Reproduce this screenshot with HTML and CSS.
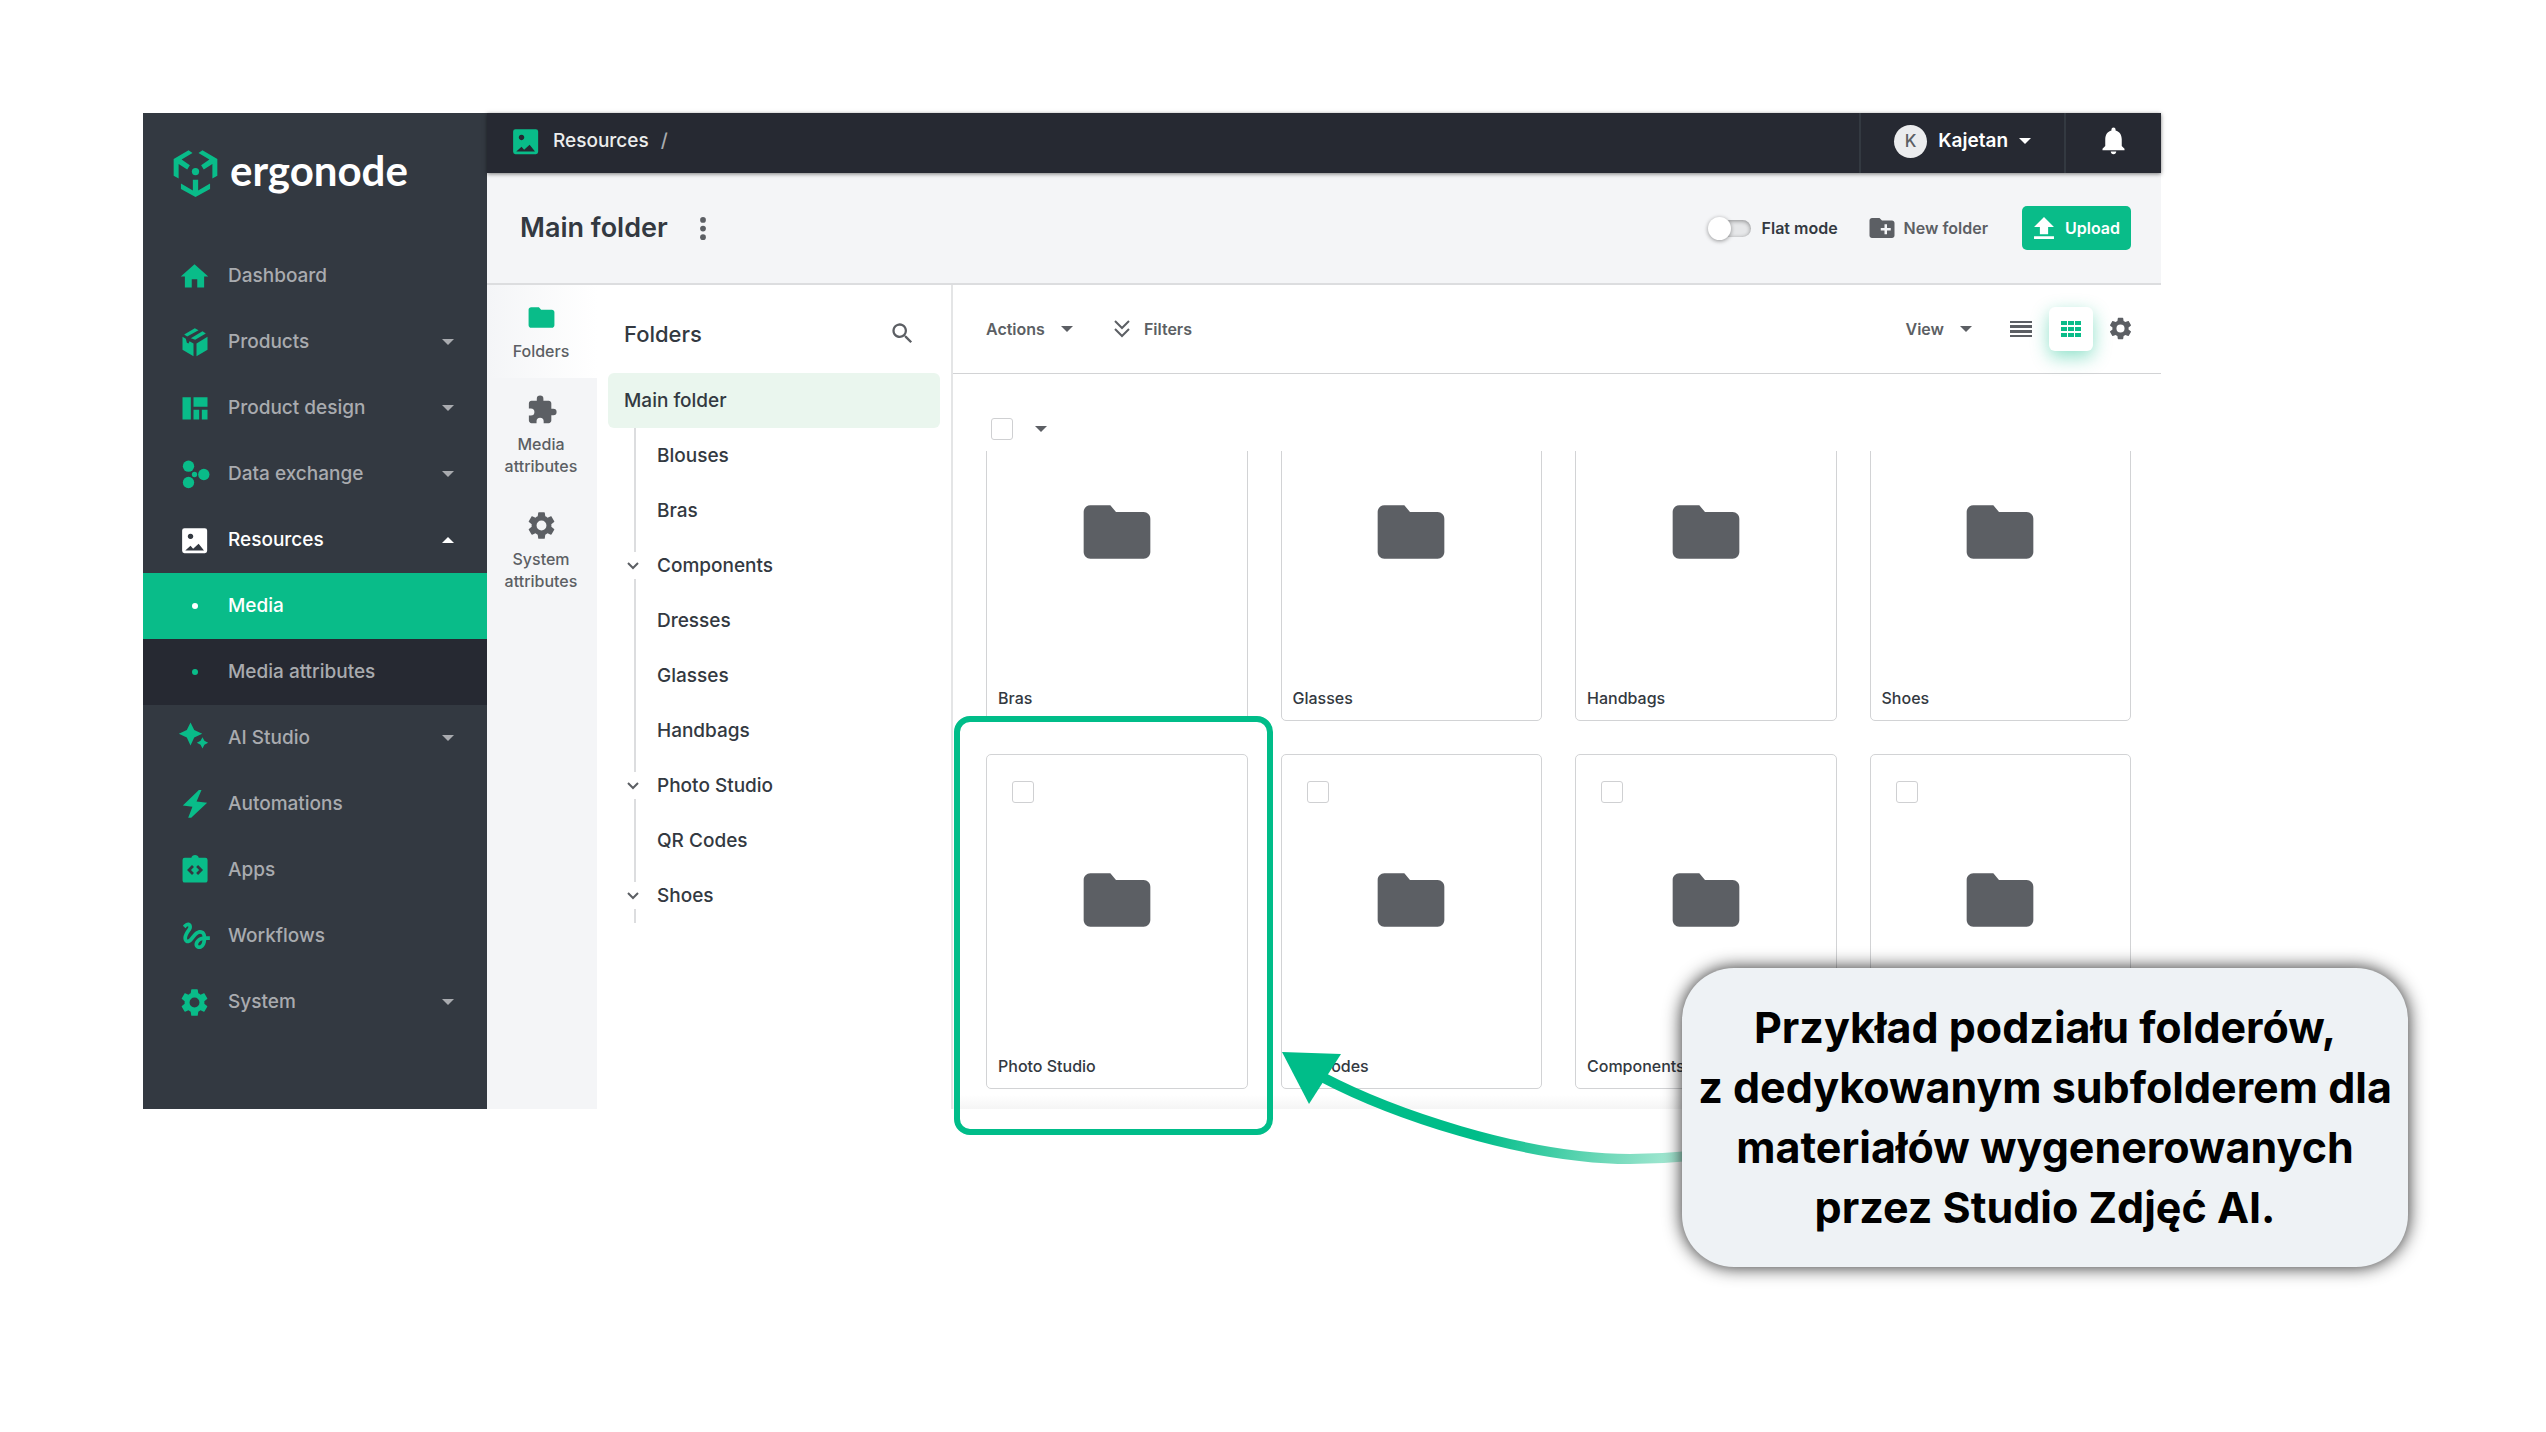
FILE: index.html
```html
<!DOCTYPE html>
<html lang="pl">
<head>
<meta charset="utf-8">
<meta name="viewport" content="width=device-width, initial-scale=1">
<title>Ergonode – Main folder</title>
<link rel="stylesheet" href="styles.css">
</head>
<body>
<svg class="sprite" aria-hidden="true">
  <symbol id="i-home" viewBox="0 0 24 24"><path d="M10 20v-6h4v6h5v-8h3L12 3 2 12h3v8z"/></symbol>
  <symbol id="i-box" viewBox="145.5 676.5 99 99"><path d="M164 702 196 683 207 689 173 708zM184 713 219 692 229 699 197 718zM159 709 169 715 172 727 177 729 180 722 192 729V767L159 748zM201 729 234 709V748L201 767z"/></symbol>
  <symbol id="i-design" viewBox="145.5 873.5 99 99"><path d="M159 889h25v67h-25zM192 889h42v29h-42zM192 927h17v29h-17zM217 927h17v29h-17z"/></symbol>
  <symbol id="i-exchange" viewBox="145.5 1073.5 99 99"><circle cx="177" cy="1098" r="17"/><circle cx="177" cy="1147" r="17"/><circle cx="223" cy="1123" r="17"/><circle cx="195" cy="1123" r="8"/></symbol>
  <symbol id="i-image" viewBox="0 0 24 24"><path fill-rule="evenodd" d="M5 3h14.500a1.700 1.700 0 0 1 1.700 1.700v14.800a1.700 1.700 0 0 1-1.700 1.700H4.700A1.700 1.700 0 0 1 3 19.500V4.700A1.700 1.700 0 0 1 4.700 3zM9.100 7a2 2 0 1 0 .01 0zM5.300 19.200h13.600L15 14.400l-4 3.600-1.900-2.100z"/></symbol>
  <symbol id="i-spark" viewBox="0 0 24 24"><path d="M9.100.3 11.800 5.900 17.600 8.600 11.800 11.300 9.100 17 6.400 11.300.6 8.600 6.400 5.900zM17.800 11l1.400 2.700 2.700 1.400-2.700 1.400-1.400 2.800-1.400-2.800-2.700-1.400 2.700-1.400z"/></symbol>
  <symbol id="i-bolt" viewBox="0 0 24 24"><path d="M15.200 1.400h1.900l-3.600 8.500 7.700.8L9.600 21.600H7.400l3.100-8-7-.8z"/></symbol>
  <symbol id="i-apps" viewBox="0 0 24 24"><path d="M4.900 2.700h4.800a2.800 2.800 0 0 1 5.400 0h4.800a1.600 1.600 0 0 1 1.600 1.600v14.900a1.600 1.600 0 0 1-1.600 1.600h-15a1.600 1.600 0 0 1-1.600-1.600V4.300a1.600 1.600 0 0 1 1.600-1.600z"/><path class="cut" d="M10.900 8.700 8 11.600l2.900 2.900M13.900 8.700l2.900 2.900-2.900 2.900"/></symbol>
  <symbol id="i-flow" viewBox="0 0 24 24"><path transform="translate(.5 -1.500) scale(1.080)" d="M4.590 6.890c.7-.71 1.400-1.350 1.710-1.220.5.2 0 1.030-.3 1.520-.25.42-2.860 3.890-2.860 6.310 0 1.280.48 2.340 1.340 2.980.75.56 1.740.73 2.640.46 1.070-.31 1.950-1.400 3.060-2.770 1.210-1.490 2.830-3.440 4.080-3.440 1.630 0 1.650 1.010 1.760 1.790-3.780.64-5.380 3.670-5.380 5.370s1.440 3.090 3.210 3.090c1.630 0 4.290-1.330 4.690-6.100H21v-2.500h-2.470c-.15-1.650-1.090-4.200-4.030-4.200-2.250 0-4.180 1.910-4.940 2.840-.58.73-2.060 2.480-2.290 2.720-.25.3-.68.84-1.110.84-.45 0-.72-.83-.36-1.920.35-1.090 1.400-2.860 1.850-3.520.78-1.140 1.300-1.920 1.300-3.280C8.950 3.690 7.310 3 6.440 3 5.120 3 3.970 4 3.720 4.250c-.36.36-.66.66-.88.93zm9.290 11.660c-.31 0-.74-.26-.74-.72 0-.6.73-2.200 2.870-2.760-.3 2.690-1.430 3.480-2.130 3.480z"/></symbol>
  <symbol id="i-gear" viewBox="0 0 24 24"><path d="M19.140 12.940c.04-.3.06-.61.06-.94 0-.32-.02-.64-.07-.94l2.030-1.580c.18-.14.23-.41.12-.61l-1.920-3.320c-.12-.22-.37-.29-.59-.22l-2.390.96c-.5-.38-1.030-.7-1.620-.94l-.36-2.540c-.04-.24-.24-.41-.48-.41h-3.840c-.24 0-.43.17-.47.41l-.36 2.540c-.59.24-1.130.57-1.620.94l-2.390-.96c-.22-.08-.47 0-.59.22L2.740 8.870c-.12.21-.08.47.12.61l2.030 1.580c-.05.3-.09.63-.09.94s.02.64.07.94l-2.030 1.580c-.18.14-.23.41-.12.61l1.920 3.320c.12.22.37.29.59.22l2.390-.96c.5.38 1.030.7 1.620.94l.36 2.540c.05.24.24.41.48.41h3.840c.24 0 .44-.17.47-.41l.36-2.540c.59-.24 1.130-.56 1.620-.94l2.390.96c.22.08.47 0 .59-.22l1.920-3.320c.12-.22.07-.47-.12-.61zM12 15.600A3.600 3.600 0 1 1 12 8.400a3.600 3.600 0 0 1 0 7.200z"/></symbol>
  <symbol id="i-folder" viewBox="0 0 24 24"><path d="M10 4H4c-1.100 0-2 .9-2 2v12c0 1.100.9 2 2 2h16c1.100 0 2-.9 2-2V8c0-1.100-.9-2-2-2h-8.300z"/></symbol>
  <symbol id="i-newfolder" viewBox="0 0 24 24"><path fill-rule="evenodd" d="M20 6h-8l-2-2H4c-1.100 0-2 .9-2 2v12c0 1.100.9 2 2 2h16c1.100 0 2-.9 2-2V8c0-1.100-.9-2-2-2zm-1 8h-3v3h-2v-3h-3v-2h3V9h2v3h3z"/></symbol>
  <symbol id="i-puzzle" viewBox="0 0 24 24"><path transform="translate(.9 .1) scale(.960)" d="M20.500 11H19V7c0-1.100-.9-2-2-2h-4V3.500a2.500 2.500 0 0 0-5 0V5H4c-1.100 0-2 .9-2 2v3.800h1.500a2.700 2.700 0 0 1 0 5.400H2V20c0 1.100.9 2 2 2h3.800v-1.500a2.700 2.700 0 0 1 5.400 0V22H17c1.100 0 2-.9 2-2v-4h1.500a2.500 2.500 0 0 0 0-5z"/></symbol>
  <symbol id="i-bell" viewBox="0 0 24 24"><path d="M12 22c1.100 0 2-.9 2-2h-4c0 1.100.89 2 2 2zm6-6v-5c0-3.070-1.640-5.640-4.500-6.320V4a1.500 1.500 0 0 0-3 0v.68C7.630 5.360 6 7.920 6 11v5l-2 2v1h16v-1z"/></symbol>
  <symbol id="i-search" viewBox="0 0 24 24"><path d="M15.500 14h-.79l-.28-.27A6.500 6.500 0 1 0 13.730 14.430l.27.28v.79l5 4.990L20.490 19zm-6 0a4.500 4.500 0 1 1 0-9 4.500 4.500 0 0 1 0 9z"/></symbol>
  <symbol id="i-upload" viewBox="0 0 58 64"><path d="M29 0 58 29H41V50H17V29H0zM0 56h58v8H0z"/></symbol>
  <symbol id="i-caret" viewBox="0 0 10 5"><path d="M0 0h10L5 5z"/></symbol>
  <symbol id="i-chevron" viewBox="0 0 12 8"><path class="line" d="M1 1l5 5 5-5"/></symbol>
  <symbol id="i-filters" viewBox="0 0 16 18"><path class="line" d="M1 1l7 7 7-7M1 9l7 7 7-7"/></symbol>
  <symbol id="i-list" viewBox="0 0 22 16"><path d="M0 0h22v2H0zM0 4h22v3H0zM0 9h22v3H0zM0 14h22v2H0z"/></symbol>
  <symbol id="i-grid" viewBox="0 0 20 16"><path d="M0 0h6v4H0zM7 0h6v4H7zM14 0h6v4h-6zM0 6h6v4H0zM7 6h6v4H7zM14 6h6v4h-6zM0 12h6v4H0zM7 12h6v4H7zM14 12h6v4h-6z"/></symbol>
  <symbol id="i-dots" viewBox="0 0 6 24"><circle cx="3" cy="3" r="3"/><circle cx="3" cy="12" r="3"/><circle cx="3" cy="21" r="3"/></symbol>
</svg>

<main class="stage">
  <div class="window">
    <aside class="sidebar">
      <a class="brand" href="#">
        <svg class="brand-mark" viewBox="128 149 136 142" aria-hidden="true"><path d="M130 176 175 150 187 158 154 178 179 195 171 208 145 191V235L130 227zM262 176 217 150 205 158 238 178 213 195 221 208 247 191V235L262 227zM188 239h16v32l36-21v17L196 291 152 267v-17l36 21z"/><circle cx="196" cy="214" r="11"/></svg>
        <span>ergonode</span>
      </a>
      <nav class="nav">
        <a href="#"><svg class="icon"><use href="#i-home"/></svg>Dashboard</a>
        <a href="#"><svg class="icon"><use href="#i-box"/></svg>Products<svg class="caret"><use href="#i-caret"/></svg></a>
        <a href="#"><svg class="icon"><use href="#i-design"/></svg>Product design<svg class="caret"><use href="#i-caret"/></svg></a>
        <a href="#"><svg class="icon"><use href="#i-exchange"/></svg>Data exchange<svg class="caret"><use href="#i-caret"/></svg></a>
        <a class="open" href="#"><svg class="icon"><use href="#i-image"/></svg>Resources<svg class="caret up"><use href="#i-caret"/></svg></a>
        <a class="sub active" href="#"><span class="icon bullet"></span>Media</a>
        <a class="sub" href="#"><span class="icon bullet"></span>Media attributes</a>
        <a href="#"><svg class="icon"><use href="#i-spark"/></svg>AI Studio<svg class="caret"><use href="#i-caret"/></svg></a>
        <a href="#"><svg class="icon"><use href="#i-bolt"/></svg>Automations</a>
        <a href="#"><svg class="icon"><use href="#i-apps"/></svg>Apps</a>
        <a href="#"><svg class="icon"><use href="#i-flow"/></svg>Workflows</a>
        <a href="#"><svg class="icon"><use href="#i-gear"/></svg>System<svg class="caret"><use href="#i-caret"/></svg></a>
      </nav>
    </aside>

    <div class="main">
      <header class="topbar">
        <div class="crumbs"><svg class="icon"><use href="#i-image"/></svg><a href="#">Resources</a><span class="slash">/</span></div>
        <button class="user" type="button"><span class="avatar">K</span>Kajetan<svg class="caret"><use href="#i-caret"/></svg></button>
        <button class="bell" type="button" aria-label="Notifications"><svg class="icon"><use href="#i-bell"/></svg></button>
      </header>

      <div class="titlebar">
        <h1>Main folder</h1>
        <button class="dots" type="button" aria-label="More"><svg><use href="#i-dots"/></svg></button>
        <label class="switch"><input type="checkbox" role="switch"><span>Flat mode</span></label>
        <button class="new" type="button"><svg><use href="#i-newfolder"/></svg>New folder</button>
        <button class="upload" type="button"><svg><use href="#i-upload"/></svg>Upload</button>
      </div>

      <div class="body">
        <div class="rail">
          <button class="on" type="button"><svg class="icon"><use href="#i-folder"/></svg>Folders</button>
          <button type="button"><svg class="icon"><use href="#i-puzzle"/></svg>Media attributes</button>
          <button type="button"><svg class="icon"><use href="#i-gear"/></svg>System attributes</button>
        </div>

        <section class="tree">
          <div class="tree-head"><h2>Folders</h2><button type="button" aria-label="Search"><svg><use href="#i-search"/></svg></button></div>
          <a class="root" href="#">Main folder</a>
          <ul>
            <li><a href="#">Blouses</a></li>
            <li><a href="#">Bras</a></li>
            <li class="parent"><svg><use href="#i-chevron"/></svg><a href="#">Components</a></li>
            <li><a href="#">Dresses</a></li>
            <li><a href="#">Glasses</a></li>
            <li><a href="#">Handbags</a></li>
            <li class="parent"><svg><use href="#i-chevron"/></svg><a href="#">Photo Studio</a></li>
            <li><a href="#">QR Codes</a></li>
            <li class="parent"><svg><use href="#i-chevron"/></svg><a href="#">Shoes</a></li>
          </ul>
        </section>

        <section class="content">
          <div class="toolbar">
            <button type="button">Actions<svg class="caret"><use href="#i-caret"/></svg></button>
            <button class="filters" type="button"><svg><use href="#i-filters"/></svg>Filters</button>
            <button class="view" type="button">View<svg class="caret"><use href="#i-caret"/></svg></button>
            <button class="mode" type="button" aria-label="List"><svg class="list"><use href="#i-list"/></svg></button>
            <button class="mode current" type="button" aria-label="Grid"><svg class="tiles"><use href="#i-grid"/></svg></button>
            <button class="settings" type="button" aria-label="Settings"><svg><use href="#i-gear"/></svg></button>
          </div>
          <div class="select-row">
            <input type="checkbox" aria-label="Select all">
            <button type="button" aria-label="Selection options"><svg class="caret"><use href="#i-caret"/></svg></button>
          </div>
          <div class="clip">
            <div class="cards">
              <label class="card"><input type="checkbox"><svg><use href="#i-folder"/></svg><span>Bras</span></label>
              <label class="card"><input type="checkbox"><svg><use href="#i-folder"/></svg><span>Glasses</span></label>
              <label class="card"><input type="checkbox"><svg><use href="#i-folder"/></svg><span>Handbags</span></label>
              <label class="card"><input type="checkbox"><svg><use href="#i-folder"/></svg><span>Shoes</span></label>
              <label class="card"><input type="checkbox"><svg><use href="#i-folder"/></svg><span>Photo Studio</span></label>
              <label class="card"><input type="checkbox"><svg><use href="#i-folder"/></svg><span>QR Codes</span></label>
              <label class="card"><input type="checkbox"><svg><use href="#i-folder"/></svg><span>Components</span></label>
              <label class="card"><input type="checkbox" aria-label="Folder"><svg><use href="#i-folder"/></svg></label>
            </div>
          </div>
        </section>
      </div>
    </div>
  </div>

  <div class="highlight"></div>
  <svg class="arrow" viewBox="0 0 420 120" aria-hidden="true">
    <defs><linearGradient id="fade" gradientUnits="userSpaceOnUse" x1="200" y1="80" x2="405" y2="125"><stop offset="0" stop-color="#00bd89"/><stop offset=".6" stop-color="#6dd8b8"/><stop offset="1" stop-color="#b0ebd8"/></linearGradient></defs>
    <path d="M2 2 61 4 29 54z" fill="#00bd89"/>
    <path d="M42 27C84 49 132 67 180 81S290 109 350 109Q380 109 410 106" fill="none" stroke="url(#fade)" stroke-width="10"/>
  </svg>
  <p class="callout">Przykład podziału folderów,<br>z dedykowanym subfolderem dla<br>materiałów wygenerowanych<br>przez Studio Zdjęć AI.</p>
</main>
</body>
</html>
```
FILE: styles.css
```css
:root {
  --green: #09bc89;
  --slate: #333941;
  --night: #262932;
  --ink: #333941;
  --grey: #5c5f64;
  --line: #dcdddf;
  --mist: #f4f5f7;
}

* { box-sizing: border-box; }

body {
  margin: 0;
  background: #fff;
  color: var(--ink);
  font: 500 19px/24px Inter, "Liberation Sans", sans-serif;
}

a { color: inherit; text-decoration: none; }

button {
  display: flex;
  align-items: center;
  padding: 0;
  border: 0;
  background: none;
  color: inherit;
  font: inherit;
}

svg { flex: none; fill: currentColor; }
.sprite { position: absolute; width: 0; height: 0; }
.icon { flex: none; width: 33px; height: 33px; }
.caret { width: 12px; height: 6px; }
.line { fill: none; stroke: currentColor; stroke-width: 2; }
.cut { fill: none; stroke: var(--slate); stroke-width: 2; }

.stage {
  position: relative;
  min-height: 100vh;
  padding: 113px 385px 113px 143px;
}

.window { display: flex; }

/* Sidebar */
.sidebar { flex: none; width: 344px; background: var(--slate); }

.brand {
  display: flex;
  align-items: center;
  gap: 12px;
  height: 130px;
  padding: 0 30px 10px;
  color: #fff;
  font: 700 42px/48px Lato, sans-serif;
}
.brand span { padding-bottom: 7px; }
.brand-mark { width: 45px; height: 47px; fill: var(--green); }

.nav a {
  display: flex;
  align-items: center;
  height: 66px;
  padding: 0 33px 0 35px;
  color: #a9abaf;
}
.nav .icon { margin-right: 17px; fill: var(--green); }
.nav .caret { margin-left: auto; }
.nav .open { color: #fff; }
.nav .open .icon { fill: #fff; }
.up { transform: scaleY(-1); }
.nav .sub { background: var(--night); }
.nav .sub.active { background: var(--green); color: #fff; }
.bullet { display: grid; place-items: center; color: var(--green); }
.active .bullet { color: #fff; }
.bullet::before {
  content: "";
  width: 6px;
  height: 6px;
  border-radius: 50%;
  background: currentColor;
}

/* Header */
.main { display: flex; flex: 1; flex-direction: column; min-width: 0; }

.topbar {
  position: relative;
  display: flex;
  height: 60px;
  background: var(--night);
  color: #fff;
  box-shadow: 0 1px 4px rgba(0, 0, 0, .5);
}
.crumbs { display: flex; flex: 1; align-items: center; padding: 0 0 4px 22px; }
.crumbs .icon { margin-right: 11px; fill: var(--green); }
.crumbs a { color: #eceded; }
.slash { margin-left: 12px; color: #a9abaf; }
.user { padding: 0 33px 4px; border: solid #333941; border-width: 0 2px; font-weight: 600; }
.user .caret { margin-left: 11px; }
.avatar {
  width: 33px;
  margin-right: 11px;
  border-radius: 50%;
  background: #ebecee;
  color: var(--grey);
  font: 500 17px/33px Inter, sans-serif;
}
.bell { justify-content: center; width: 95px; padding-bottom: 5px; }

.titlebar {
  display: flex;
  align-items: center;
  height: 112px;
  padding: 0 30px 0 33px;
  border-bottom: 2px solid var(--line);
  background: var(--mist);
  font-size: 16px;
  font-weight: 600;
}
h1 { margin: 0 32px 0 0; font-size: 27px; font-weight: 600; line-height: 36px; }
.dots { color: var(--grey); }
.dots svg { width: 6px; height: 23px; }
.switch { display: flex; align-items: center; gap: 11px; margin-left: auto; }
.switch input {
  appearance: none;
  display: flex;
  align-items: center;
  width: 36px;
  height: 17px;
  margin: 0;
  border-radius: 9px;
  background: #e6e7e9;
  box-shadow: inset 0 1px 4px rgba(0, 0, 0, .4);
}
.switch input::before {
  content: "";
  flex: none;
  width: 23px;
  height: 23px;
  margin-left: -7px;
  border-radius: 50%;
  background: #fff;
  box-shadow: 0 1px 4px rgba(0, 0, 0, .4);
}
.new { margin: 0 34px 0 29px; color: var(--grey); }
.new svg { width: 30px; height: 30px; margin-right: 7px; }
.upload {
  justify-content: space-between;
  width: 109px;
  height: 44px;
  padding: 0 11px 0 12px;
  border-radius: 5px;
  background: var(--green);
  color: #fff;
}
.upload svg { width: 20px; height: 22px; }

/* Body columns */
.body { display: flex; flex: 1; }

.rail { flex: none; width: 110px; background: var(--mist); }
.rail button {
  flex-direction: column;
  gap: 6px;
  width: 100%;
  padding: 16px 17px 16px 15px;
  color: var(--grey);
  font-size: 16px;
  line-height: 22px;
}
.rail .on { background: linear-gradient(90deg, var(--mist), #fff); }
.rail .on .icon { fill: var(--green); padding: 1px; }

.tree { flex: none; width: 356px; border-right: 2px solid #e4e5e6; padding: 0 11px; }
.tree-head {
  display: flex;
  align-items: center;
  justify-content: space-between;
  height: 88px;
  padding: 9px 24px 0 16px;
  color: var(--grey);
}
h2 { margin: 0; color: var(--ink); font-size: 22px; font-weight: 500; }
.tree-head svg { width: 27px; height: 27px; display: block; }
.root {
  display: flex;
  align-items: center;
  height: 55px;
  padding-left: 16px;
  border-radius: 6px;
  background: #eaf6ee;
}
.tree ul { margin: 0; padding: 0; list-style: none; }
.tree li {
  display: flex;
  align-items: center;
  height: 55px;
  padding-left: 49px;
  background: linear-gradient(var(--line), var(--line)) 26px 0 / 2px 100% no-repeat;
}
.tree .parent {
  padding-left: 19px;
  gap: 18px;
  background:
    linear-gradient(var(--line), var(--line)) 26px 0 / 2px 14px no-repeat,
    linear-gradient(var(--line), var(--line)) 26px 100% / 2px 14px no-repeat;
}
.parent svg { width: 12px; height: 8px; color: var(--grey); }

.content { display: flex; flex: 1; flex-direction: column; min-width: 0; }
.toolbar {
  display: flex;
  align-items: center;
  height: 89px;
  padding: 0 30px 1px 33px;
  border-bottom: 1px solid #d2d3d5;
  color: var(--grey);
  font-size: 16px;
  font-weight: 600;
}
.toolbar .caret { margin-left: 16px; }
.filters { margin-left: 41px; }
.filters svg { width: 16px; height: 18px; margin-right: 14px; }
.view { margin-left: auto; }
.mode { justify-content: center; width: 44px; height: 44px; }
.view + .mode { margin: 0 6px 0 27px; }
.current { border-radius: 6px; color: var(--green); box-shadow: 0 6px 18px rgba(9, 188, 137, .45); background: #fff; }
.list { width: 22px; height: 16px; }
.tiles { width: 20px; height: 16px; }
.settings { margin-left: 14px; }
.settings svg { width: 27px; height: 27px; margin-right: -3px; }

.content input {
  appearance: none;
  width: 22px;
  height: 22px;
  margin: 0;
  border: 1px solid #cfd0d2;
  border-radius: 3px;
  background: #fff;
}
.select-row { display: flex; align-items: center; gap: 22px; padding: 44px 0 11px 38px; color: var(--grey); }

.clip {
  flex: 1;
  overflow: hidden;
  padding: 0 30px 20px 33px;
  background: linear-gradient(transparent, #f5f5f5) bottom / 100% 14px no-repeat;
}
.cards {
  display: grid;
  grid-template-columns: repeat(4, 1fr);
  gap: 33px;
  margin-top: -65px;
}
.card {
  display: flex;
  flex-direction: column;
  align-items: center;
  height: 335px;
  padding: 26px 11px 10px;
  border: 1px solid #d2d3d5;
  border-radius: 5px;
  font-size: 16px;
}
.card input { align-self: flex-start; margin-left: 14px; }
.card svg { width: 80px; height: 80px; margin-top: 57px; fill: var(--grey); }
.card span { align-self: flex-start; margin-top: auto; }

/* Annotations drawn over the window */
.highlight {
  position: absolute;
  left: 954px;
  top: 716px;
  width: 319px;
  height: 419px;
  border: 6px solid #00bd89;
  border-radius: 16px;
}
.arrow { position: absolute; left: 1280px; top: 1050px; width: 420px; height: 120px; }
.callout {
  position: absolute;
  left: 1682px;
  top: 968px;
  width: 726px;
  margin: 0;
  padding: 29px 0 30px;
  border-radius: 52px;
  background: #eef2f5;
  box-shadow: 0 0 18px rgba(0, 0, 0, .85);
  color: #000;
  font-size: 43px;
  font-weight: 700;
  line-height: 60px;
  text-align: center;
  white-space: nowrap;
}
```
